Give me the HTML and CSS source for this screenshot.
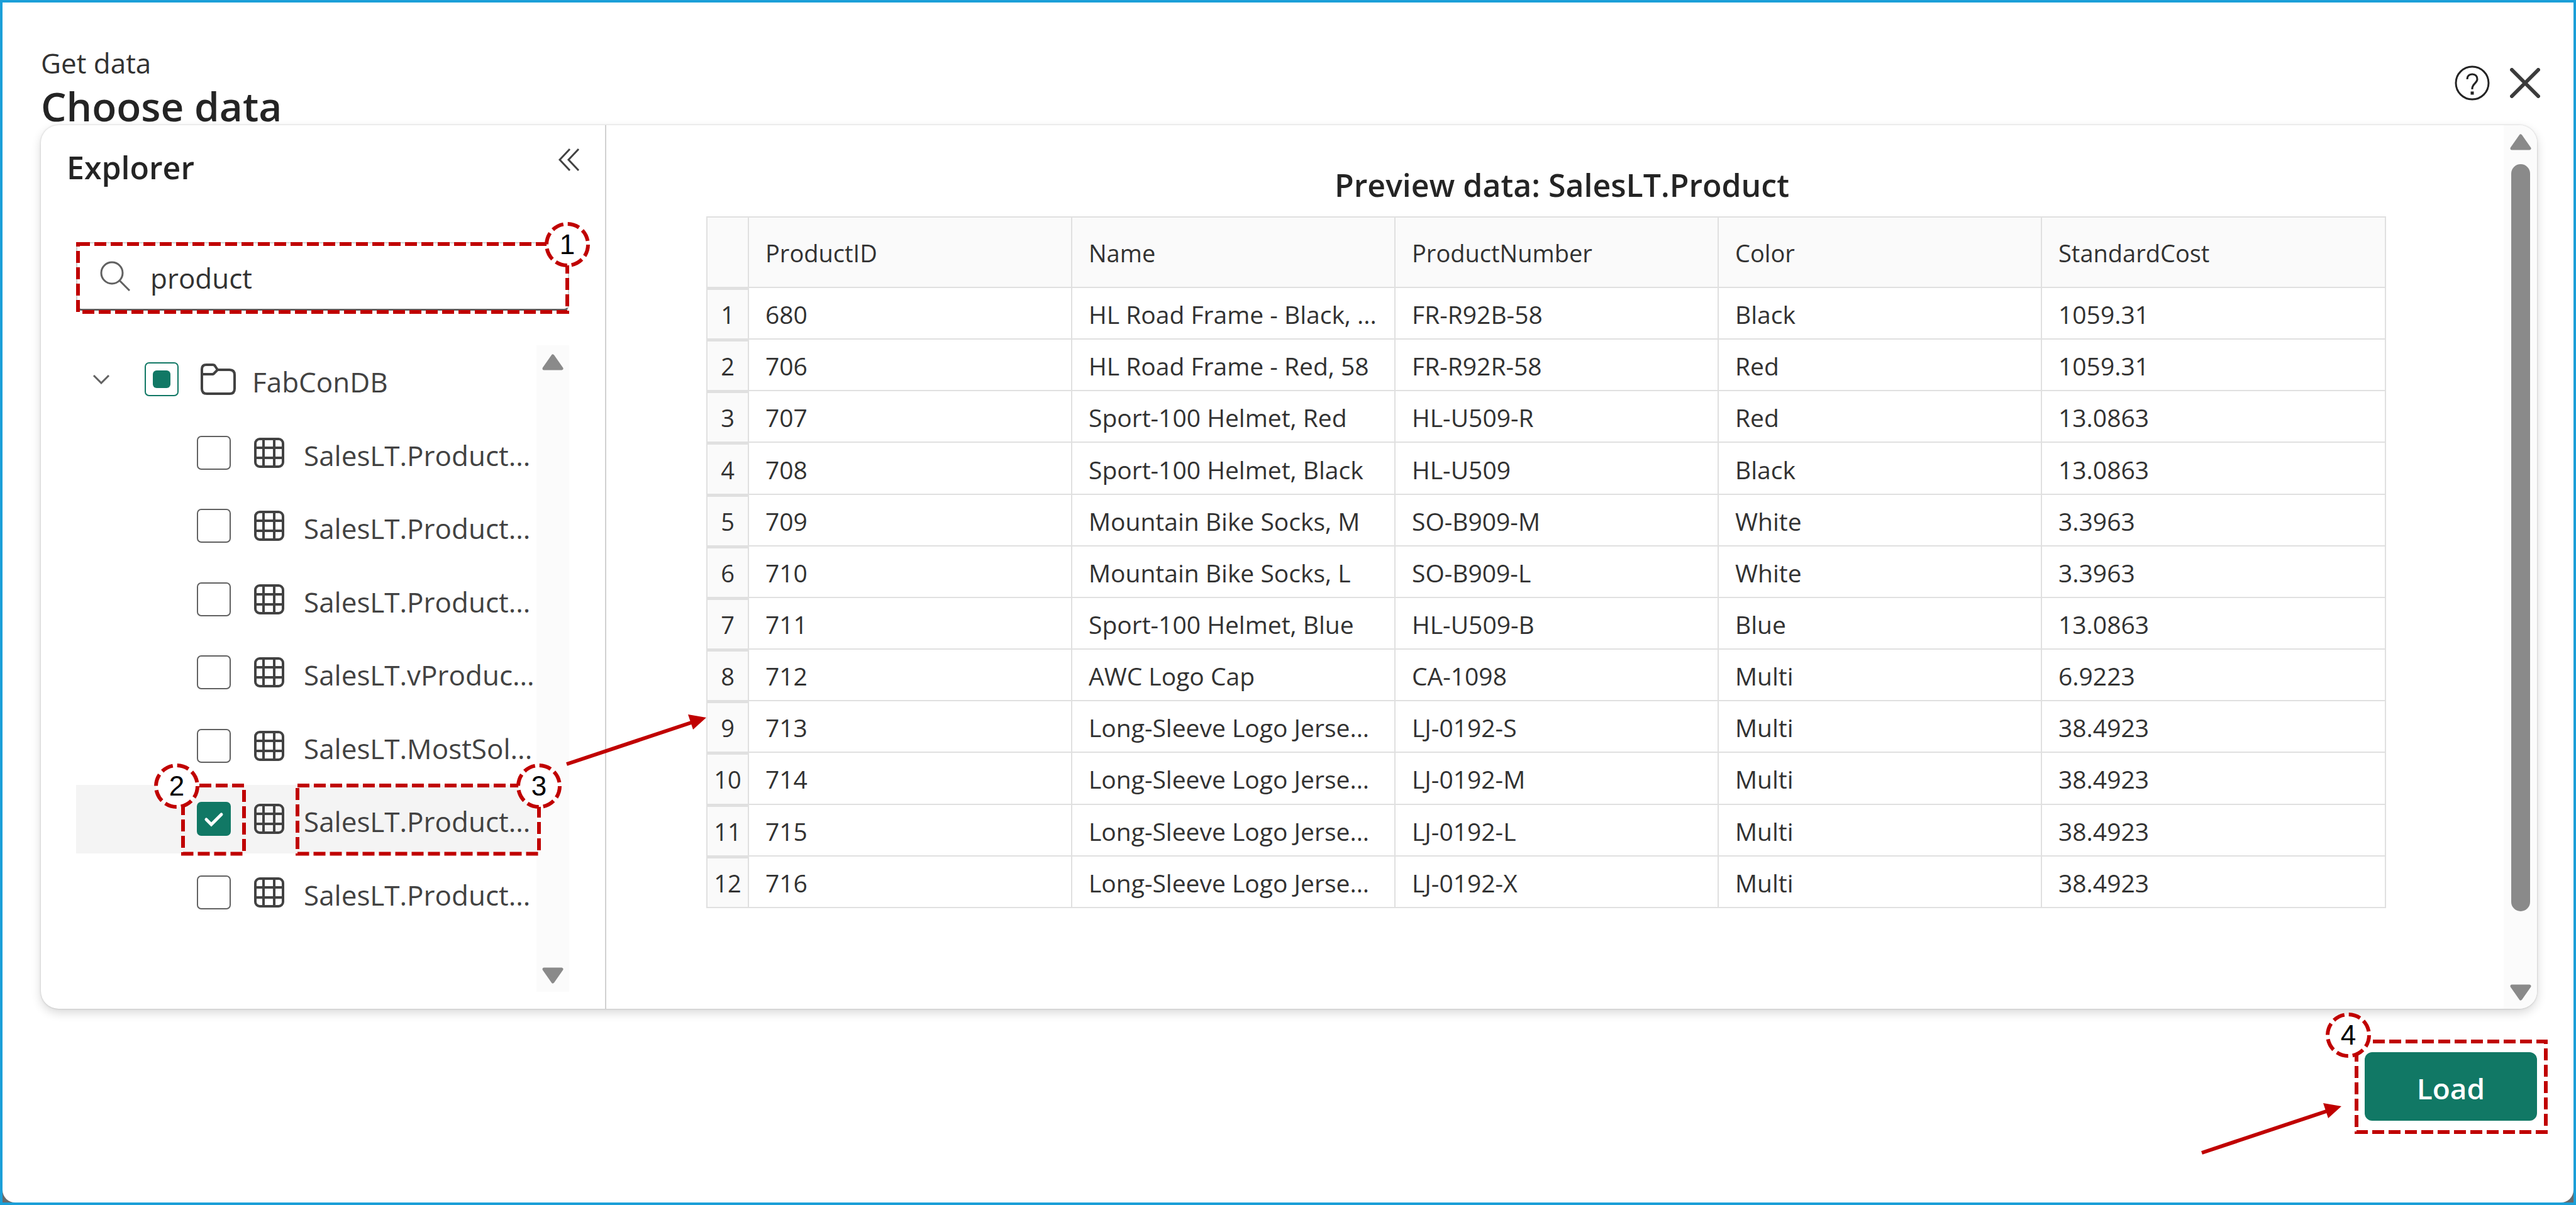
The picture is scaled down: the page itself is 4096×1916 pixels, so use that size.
FILE: index.html
```html
<!DOCTYPE html>
<html lang="en">
<head>
<meta charset="utf-8">
<meta name="viewport" content="width=device-width, initial-scale=1">
<title>Choose data</title>
<link rel="stylesheet" href="styles.css">
</head>
<body>
<!-- Shared icon symbols -->
<svg class="symbols" aria-hidden="true">
  <symbol id="icon-grid" viewBox="0 0 48 48">
    <rect x="2" y="2" width="44" height="44" rx="7"/>
    <path d="M15 2v44M32 2v44M2 16h44M2 32h44"/>
  </symbol>
</svg>

<div class="frame">
<main class="dialog">
  <header class="dialog-header">
    <div class="titles">
      <p class="eyebrow">Get data</p>
      <h1 class="title">Choose data</h1>
    </div>
    <div class="header-actions">
      <button class="icon-button" type="button" aria-label="Help">
        <svg class="icon-help" viewBox="0 0 56 56"><circle cx="28" cy="28" r="26"/><path d="M20 22c0-5 3-8 8-8s8 3 8 8c0 6-8 7-8 15v1"/><path class="dot" d="M25.500 41.500h5v5h-5z"/></svg>
      </button>
      <button class="icon-button" type="button" aria-label="Close">
        <svg class="icon-close" viewBox="0 0 48 48"><path d="M3 3l42 42M45 3L3 45"/></svg>
      </button>
    </div>
  </header>

  <div class="card">
    <section class="explorer">
      <div class="explorer-header">
        <h2 class="panel-title">Explorer</h2>
        <button class="icon-button" type="button" aria-label="Collapse explorer">
          <svg class="icon-collapse" viewBox="0 0 34 38"><path d="M18 2L2 19l16 17M32 2L16 19l16 17"/></svg>
        </button>
      </div>

      <div class="search">
        <svg class="icon-search" viewBox="0 0 48 48"><circle cx="19" cy="19" r="17"/><path d="M31 31l16 16"/></svg>
        <input class="search-input" type="text" value="product" aria-label="Search tables">
        <div class="callout callout-search"><svg class="callout-box"><rect/></svg>
          <div class="badge badge-right"><svg class="badge-ring" viewBox="0 0 72 72"><circle cx="36" cy="36" r="33"/></svg><span>1</span></div></div>
      </div>

      <div class="tree-area">
        <ul class="tree">
          <li class="row row-root">
            <svg class="icon-chevron" viewBox="0 0 28 16"><path d="M2 2l12 12L26 2"/></svg>
            <input class="check check-mixed" type="checkbox" id="db">
            <svg class="icon-folder" viewBox="0 0 56 50"><path d="M2 9q0-7 7-7h10q3 0 4 2l4 6h19q8 0 8 8v22q0 8-8 8H10q-8 0-8-8z"/><path d="M2 17h16q3 0 4-2l5-5"/></svg>
            <label class="name" for="db">FabConDB</label>
          </li>
          <li class="row"><input class="check" type="checkbox" id="t1"><svg class="icon-grid"><use href="#icon-grid"/></svg><label class="name" for="t1">SalesLT.Product...</label></li>
          <li class="row"><input class="check" type="checkbox" id="t2"><svg class="icon-grid"><use href="#icon-grid"/></svg><label class="name" for="t2">SalesLT.Product...</label></li>
          <li class="row"><input class="check" type="checkbox" id="t3"><svg class="icon-grid"><use href="#icon-grid"/></svg><label class="name" for="t3">SalesLT.Product...</label></li>
          <li class="row"><input class="check" type="checkbox" id="t4"><svg class="icon-grid"><use href="#icon-grid"/></svg><label class="name" for="t4">SalesLT.vProduc...</label></li>
          <li class="row"><input class="check" type="checkbox" id="t5"><svg class="icon-grid"><use href="#icon-grid"/></svg><label class="name" for="t5">SalesLT.MostSol...</label></li>
          <li class="row row-selected">
            <span class="check-wrap"><input class="check" type="checkbox" id="t6" checked><svg class="icon-tick" viewBox="0 0 54 54"><path d="M15 28l8 8 16-16"/></svg></span>
            <svg class="icon-grid"><use href="#icon-grid"/></svg>
            <label class="name" for="t6">SalesLT.Product...</label>
            <div class="callout callout-check"><svg class="callout-box"><rect/></svg>
              <div class="badge badge-left"><svg class="badge-ring" viewBox="0 0 72 72"><circle cx="36" cy="36" r="33"/></svg><span>2</span></div></div>
            <div class="callout callout-name"><svg class="callout-box"><rect/></svg>
              <div class="badge badge-right"><svg class="badge-ring" viewBox="0 0 72 72"><circle cx="36" cy="36" r="33"/></svg><span>3</span></div></div>
          </li>
          <li class="row"><input class="check" type="checkbox" id="t7"><svg class="icon-grid"><use href="#icon-grid"/></svg><label class="name" for="t7">SalesLT.Product...</label></li>
        </ul>
        <div class="scrollbar">
          <svg class="scroll-arrow" viewBox="0 0 34 26"><path d="M17 3L31 23H3z"/></svg>
          <svg class="scroll-arrow" viewBox="0 0 34 26"><path d="M17 23L31 3H3z"/></svg>
        </div>
      </div>
      <!-- Arrow from the selected table to its preview -->
      <svg class="arrow arrow-preview" viewBox="0 0 224 84"><path class="shaft" d="M1 79L202 12"/><path class="head" d="M194 0L223 5L202 24z"/></svg>
    </section>

    <section class="preview">
      <div class="preview-body">
        <h2 class="panel-title preview-title">Preview data: SalesLT.Product</h2>
        <table class="grid">
          <colgroup><col class="col-index"><col class="col-field"><col class="col-field"><col class="col-field"><col class="col-field"><col></colgroup>
          <thead>
            <tr><th class="corner"></th><th scope="col">ProductID</th><th scope="col">Name</th><th scope="col">ProductNumber</th><th scope="col">Color</th><th scope="col">StandardCost</th></tr>
          </thead>
          <tbody>
            <tr><th scope="row">1</th><td>680</td><td>HL Road Frame - Black, ...</td><td>FR-R92B-58</td><td>Black</td><td>1059.31</td></tr>
            <tr><th scope="row">2</th><td>706</td><td>HL Road Frame - Red, 58</td><td>FR-R92R-58</td><td>Red</td><td>1059.31</td></tr>
            <tr><th scope="row">3</th><td>707</td><td>Sport-100 Helmet, Red</td><td>HL-U509-R</td><td>Red</td><td>13.0863</td></tr>
            <tr><th scope="row">4</th><td>708</td><td>Sport-100 Helmet, Black</td><td>HL-U509</td><td>Black</td><td>13.0863</td></tr>
            <tr><th scope="row">5</th><td>709</td><td>Mountain Bike Socks, M</td><td>SO-B909-M</td><td>White</td><td>3.3963</td></tr>
            <tr><th scope="row">6</th><td>710</td><td>Mountain Bike Socks, L</td><td>SO-B909-L</td><td>White</td><td>3.3963</td></tr>
            <tr><th scope="row">7</th><td>711</td><td>Sport-100 Helmet, Blue</td><td>HL-U509-B</td><td>Blue</td><td>13.0863</td></tr>
            <tr><th scope="row">8</th><td>712</td><td>AWC Logo Cap</td><td>CA-1098</td><td>Multi</td><td>6.9223</td></tr>
            <tr><th scope="row">9</th><td>713</td><td>Long-Sleeve Logo Jerse...</td><td>LJ-0192-S</td><td>Multi</td><td>38.4923</td></tr>
            <tr><th scope="row">10</th><td>714</td><td>Long-Sleeve Logo Jerse...</td><td>LJ-0192-M</td><td>Multi</td><td>38.4923</td></tr>
            <tr><th scope="row">11</th><td>715</td><td>Long-Sleeve Logo Jerse...</td><td>LJ-0192-L</td><td>Multi</td><td>38.4923</td></tr>
            <tr><th scope="row">12</th><td>716</td><td>Long-Sleeve Logo Jerse...</td><td>LJ-0192-X</td><td>Multi</td><td>38.4923</td></tr>
          </tbody>
        </table>
      </div>
      <div class="scrollbar scrollbar-main">
        <svg class="scroll-arrow" viewBox="0 0 34 26"><path d="M17 3L31 23H3z"/></svg>
        <div class="scroll-thumb"></div>
        <div class="scroll-rest"></div>
        <svg class="scroll-arrow" viewBox="0 0 34 26"><path d="M17 23L31 3H3z"/></svg>
      </div>
    </section>
  </div>

  <footer class="dialog-footer">
    <div class="load-wrap">
      <button class="load-button" type="button">Load</button>
      <div class="callout callout-load"><svg class="callout-box"><rect/></svg>
        <div class="badge badge-load"><svg class="badge-ring" viewBox="0 0 72 72"><circle cx="36" cy="36" r="33"/></svg><span>4</span></div></div>
      <svg class="arrow arrow-load" viewBox="0 0 224 84"><path class="shaft" d="M1 79L202 12"/><path class="head" d="M194 0L223 5L202 24z"/></svg>
    </div>
  </footer>
</main>
</div>
</body>
</html>
```
FILE: styles.css
```css
:root {
  --accent: #117865;
  --mark: #c00000;
  --text: #242424;
  --text-soft: #424242;
  --line: #e0e0e0;
  --subtle: #fafafa;
  --scroll: #8a8a8a;
}

* { box-sizing: border-box; }

body {
  margin: 0;
  background: #fff;
  color: var(--text);
  font-family: "Open Sans", "Noto Sans", sans-serif;
  font-size: 38px;
}

h1, h2, p, ul { margin: 0; padding: 0; font-weight: 400; }
ul { list-style: none; }
svg { display: block; fill: none; flex: none; }
button, input { font-family: inherit; color: inherit; }

.symbols { position: absolute; width: 0; height: 0; }

/* Window frame */
.frame {
  display: flex;
  min-height: 100vh;
  border: 4px solid #1b9fd8;
  background: #6a6a6a;
}
.dialog {
  display: flex;
  flex: 1;
  flex-direction: column;
  min-width: 0;
  padding: 68px 58px 0 61px;
  border-radius: 0 0 20px 20px;
  background: #fff;
}

.dialog-header {
  display: flex;
  align-items: center;
  justify-content: space-between;
}
.titles { display: grid; gap: 11px; }
.eyebrow { font-size: 44px; line-height: 56px; color: #323232; }
.title { font-size: 64px; line-height: 60px; font-weight: 600; }
.header-actions {
  display: flex;
  align-items: center;
  gap: 32px;
  margin-right: -5px;
  padding-bottom: 8px;
}
.icon-button {
  padding: 0;
  border: 0;
  background: none;
}
.icon-help { width: 56px; height: 56px; stroke: #242424; stroke-width: 3; }
.icon-help .dot { fill: #242424; stroke: none; }
.icon-close { width: 48px; height: 48px; stroke: #3b3b3b; stroke-width: 6; stroke-linecap: round; }

/* Main card */
.card {
  display: grid;
  flex: 1;
  grid-template-columns: 899px minmax(0, 1fr);
  border-radius: 28px;
  background: #fff;
  box-shadow: 0 0 3px rgba(0, 0, 0, .2), 0 6px 16px rgba(0, 0, 0, .16);
}

.panel-title { font-size: 50px; line-height: 72px; font-weight: 600; }

/* Explorer */
.explorer {
  position: relative;
  display: flex;
  flex-direction: column;
  padding: 31px 57px 27px 56px;
  border-right: 2px solid #d1d1d1;
}
.explorer-header {
  display: flex;
  align-items: center;
  justify-content: space-between;
  margin-left: -15px;
  margin-right: -17px;
}
.explorer-header .icon-button { padding-bottom: 24px; }
.icon-collapse { width: 34px; height: 38px; stroke: #424242; stroke-width: 3; }

.search {
  position: relative;
  display: flex;
  align-items: center;
  height: 109px;
  margin-top: 83px;
  padding-left: 36px;
  border: 2px solid #d1d1d1;
  border-bottom: 3px solid #616161;
  border-radius: 8px;
}
.icon-search { width: 48px; height: 48px; stroke: #616161; stroke-width: 3; }
.search-input {
  flex: 1;
  min-width: 0;
  height: 100%;
  padding: 6px 0 0 32px;
  border: 0;
  outline: 0;
  background: none;
  color: #323232;
  font-size: 44px;
}

.tree-area {
  display: grid;
  flex: 1;
  grid-template-columns: minmax(0, 1fr) 52px;
  margin-top: 55px;
}
.tree {
  display: grid;
  align-self: start;
  grid-auto-rows: minmax(0, 1fr);
  gap: 8px;
  height: 924px;
  color: var(--text-soft);
}
.row {
  position: relative;
  display: flex;
  align-items: center;
  padding-left: 192px;
}
.row-root { padding-left: 26px; }
.row-selected { background: #f4f4f4; }
.name {
  padding-top: 8px;
  font-size: 44px;
  line-height: 56px;
  white-space: nowrap;
}
.icon-chevron { width: 28px; height: 16px; margin-right: 55px; stroke: #616161; stroke-width: 3; }
.icon-folder { width: 56px; height: 50px; margin: 0 26px 0 35px; stroke: var(--text-soft); stroke-width: 4; }
.icon-grid { width: 48px; height: 48px; margin: 0 31px 0 37px; stroke: var(--text-soft); stroke-width: 4; }

.check {
  display: block;
  flex: none;
  width: 54px;
  height: 54px;
  margin: 0;
  border: 2px solid #616161;
  border-radius: 7px;
  appearance: none;
  background: #fff;
}
.check:checked { border-color: var(--accent); background: var(--accent); }
.check-mixed {
  display: grid;
  place-content: center;
  border-color: var(--accent);
}
.check-mixed::before {
  content: "";
  width: 28px;
  height: 28px;
  border-radius: 6px;
  background: var(--accent);
}
.check-wrap { display: grid; }
.check-wrap > * { grid-area: 1 / 1; }
.icon-tick { width: 54px; height: 54px; stroke: #fff; stroke-width: 5; stroke-linecap: round; pointer-events: none; }

/* Scrollbars */
.scrollbar {
  display: flex;
  flex-direction: column;
  align-items: center;
  justify-content: space-between;
  padding: 14px 0 13px;
  background: #fbfbfb;
}
.scroll-arrow {
  width: 34px;
  height: 26px;
  fill: var(--scroll);
  stroke: var(--scroll);
  stroke-width: 5;
  stroke-linejoin: round;
}
.scrollbar-main { border-radius: 0 28px 28px 0; }
.scroll-thumb {
  flex: 1189 0 0;
  width: 30px;
  margin-top: 22px;
  border-radius: 15px;
  background: var(--scroll);
}
.scroll-rest { flex: 116 0 0; }

/* Preview */
.preview {
  display: grid;
  grid-template-columns: minmax(0, 1fr) 53px;
}
.preview-body { padding: 59px 187px 0 159px; }
.preview-title { margin-right: -4px; padding-left: 46px; text-align: center; }
.grid {
  width: 100%;
  height: 1100px;
  margin-top: 14px;
  border-collapse: collapse;
  table-layout: fixed;
  color: #323232;
  line-height: 52px;
}
.col-index { width: 66px; }
.col-field { width: 514px; }
.grid th, .grid td {
  overflow: hidden;
  height: 82px;
  padding: 4px 0 0 26px;
  border: 2px solid var(--line);
  font-weight: 400;
  text-align: left;
  white-space: nowrap;
}
.grid td { font-size: 39px; }
.grid thead th {
  height: 112px;
  padding-top: 2px;
  background: var(--subtle);
}
.grid tbody th {
  padding-left: 0;
  background: var(--subtle);
  box-shadow: inset 0 3px var(--line);
  text-align: center;
}

/* Footer */
.dialog-footer {
  display: flex;
  justify-content: flex-end;
  padding: 69px 0 130px;
}
.load-wrap { position: relative; }
.load-button {
  display: block;
  width: 274px;
  height: 109px;
  padding: 4px 0 0;
  border: 0;
  border-radius: 12px;
  background: var(--accent);
  color: #fff;
  font-size: 46px;
  font-weight: 600;
}

/* Step markers drawn over the dialog */
.callout { position: absolute; pointer-events: none; }
.callout-search { inset: -2px -2px -8px; }
.callout-check { top: -2px; bottom: -4px; left: 167px; width: 103px; z-index: 1; }
.callout-name { top: -2px; bottom: -4px; left: 349px; width: 390px; z-index: 1; }
.callout-load { inset: -20px -17px -21px -16px; }
.callout-box { width: 100%; height: 100%; overflow: visible; }
.callout-box rect {
  x: 3px;
  y: 3px;
  width: calc(100% - 6px);
  height: calc(100% - 6px);
  stroke: var(--mark);
  stroke-width: 6px;
  stroke-dasharray: 19 7;
}
.badge {
  position: absolute;
  display: grid;
  place-items: center;
  width: 72px;
  height: 72px;
  color: #000;
  font-family: "Liberation Sans", Arial, sans-serif;
  font-size: 44px;
  line-height: 48px;
}
.badge > * { grid-area: 1 / 1; }
.badge-ring { width: 72px; height: 72px; fill: #fff; stroke: var(--mark); stroke-width: 6; stroke-dasharray: 19 7; }
.badge-right { top: -32px; right: -33px; }
.badge-left { top: -32px; left: -43px; }
.badge-load { top: -43px; left: -46px; }

.arrow { position: absolute; width: 224px; height: 84px; }
.arrow .shaft { stroke: var(--mark); stroke-width: 6; }
.arrow .head { fill: var(--mark); }
.arrow-preview { right: -162px; bottom: 384px; z-index: 1; }
.arrow-load { right: 310px; bottom: -56px; }
```
